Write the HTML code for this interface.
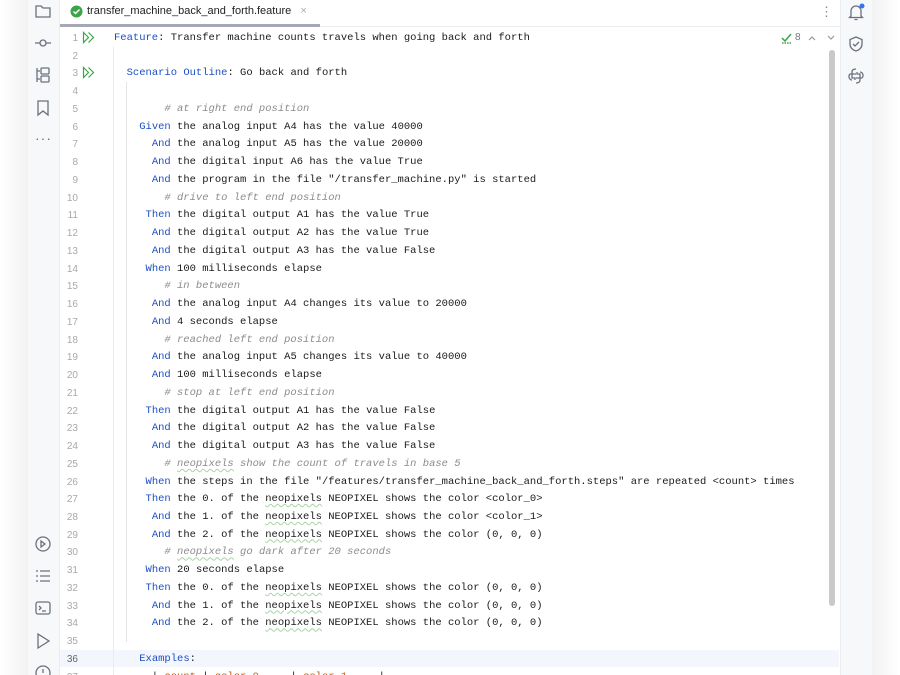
<!DOCTYPE html>
<html style="width:900px;height:675px;overflow:hidden"><head><meta charset="utf-8"><style>
*{margin:0;padding:0;box-sizing:border-box}
body{width:900px;height:675px;overflow:hidden;background:#fff;position:relative;font-family:"Liberation Sans",sans-serif}
.shadowL{position:absolute;left:0;top:0;width:28px;height:675px;background:linear-gradient(to right,#fff,#f2f2f2)}
.shadowR{position:absolute;left:872px;top:0;width:28px;height:675px;background:linear-gradient(to left,#fff,#f2f2f2)}
.lbar{position:absolute;left:28px;top:0;width:32px;height:675px;background:#f7f8fa;border-right:1px solid #ebecf0}
.rbar{position:absolute;left:840px;top:0;width:32px;height:675px;background:#f7f8fa;border-left:1px solid #ebecf0}
.tabs{position:absolute;left:60px;top:0;width:780px;height:27px;border-bottom:1px solid #ebecf0;background:#fff}
.tab{position:absolute;left:60px;top:0;width:270px;height:24px;font-size:11px;color:#222;line-height:23px;padding-left:27px;white-space:nowrap}
.tabline{position:absolute;left:60px;top:24px;width:260px;height:3px;background:#a3a8b3}
.code{position:absolute;left:0;top:30px;font-family:"Liberation Mono",monospace;font-size:10.5px;line-height:17.74px;white-space:pre;color:#1a1a1a}
.ln{position:absolute;left:60px;width:18px;text-align:right;color:#a6a9ae;font-family:"Liberation Sans",sans-serif;font-size:10px}
.l{position:absolute;left:114px}
.k{color:#1c4fc4}.c{color:#8c8c8c;font-style:italic}.o{color:#c25d12}
.w{text-decoration:underline wavy #a5d6a5;text-decoration-thickness:0.5px;text-underline-offset:2px}
svg{position:absolute}
</style></head><body>
<div class="shadowL"></div><div class="shadowR"></div>
<div style="position:absolute;left:60px;top:650px;width:779px;height:17px;background:#f3f6fd"></div>
<div class="lbar"></div><div class="rbar"></div>
<div class="tabs"></div>
<div class="tab">transfer_machine_back_and_forth.feature <span style="color:#aaa;margin-left:6px">×</span></div>
<div class="tabline"></div>
<svg style="left:70px;top:5px" width="13" height="13"><circle cx="6.5" cy="6.5" r="6" fill="#3aa548"/><path d="M3.5 6.5l2 2 4-4" stroke="#fff" stroke-width="1.5" fill="none"/></svg>
<div style="position:absolute;left:820px;top:4px;color:#888;font-size:13px">⋮</div>
<svg style="left:34px;top:3px" width="18" height="16" fill="none" stroke="#6c707e" stroke-width="1.3"><path d="M2 3h5l2 2h7v9H2z"/></svg>
<svg style="left:34px;top:35px" width="18" height="16" fill="none" stroke="#6c707e" stroke-width="1.3"><circle cx="9" cy="8" r="3"/><path d="M1 8h5M12 8h5"/></svg>
<svg style="left:34px;top:66px" width="18" height="18" fill="none" stroke="#6c707e" stroke-width="1.3"><path d="M3 2v14M3 5h3M3 13h3"/><rect x="7" y="2" width="8" height="6" rx="1"/><rect x="7" y="10" width="8" height="6" rx="1"/></svg>
<svg style="left:35px;top:99px" width="16" height="18" fill="none" stroke="#6c707e" stroke-width="1.3"><path d="M3 2h10v14l-5-4-5 4z"/></svg>
<div style="position:absolute;left:35px;top:130px;color:#6c707e;font-size:14px;letter-spacing:1px">···</div>
<svg style="left:34px;top:535px" width="18" height="18" fill="none" stroke="#6c707e" stroke-width="1.3"><circle cx="9" cy="9" r="7"/><path d="M7 6l4 3-4 3z"/></svg>
<svg style="left:34px;top:568px" width="18" height="16" fill="none" stroke="#6c707e" stroke-width="1.3"><path d="M2 3h2M6 3h10M2 8h2M6 8h10M2 13h2M6 13h10"/></svg>
<svg style="left:34px;top:600px" width="18" height="16" fill="none" stroke="#6c707e" stroke-width="1.3"><rect x="2" y="2" width="14" height="12" rx="2"/><path d="M5 6l2 2-2 2M8 11h4"/></svg>
<svg style="left:35px;top:632px" width="16" height="18" fill="none" stroke="#6c707e" stroke-width="1.3"><path d="M3 2l11 7-11 7z"/></svg>
<svg style="left:34px;top:664px" width="18" height="11" fill="none" stroke="#6c707e" stroke-width="1.3"><circle cx="9" cy="9" r="7"/><path d="M9 5v4"/></svg>
<svg style="left:847px;top:2px" width="20" height="20" fill="none" stroke="#6c707e" stroke-width="1.3"><path d="M4 14V9a5 5 0 0 1 10 0v5l1.5 1.5h-13zM7.5 17.5h3"/><circle cx="15" cy="4" r="2.5" fill="#3574f0" stroke="none"/></svg>
<svg style="left:847px;top:35px" width="18" height="18" fill="none" stroke="#6c707e" stroke-width="1.3"><path d="M9 2l6 2.5v4.5c0 4-3 6-6 7-3-1-6-3-6-7V4.5z"/><path d="M6 9l2 2 4-4"/></svg>
<svg style="left:847px;top:67px" width="18" height="18" fill="none" stroke="#6c707e" stroke-width="1.3"><path d="M9 2c-3 0-4 1-4 3v2h4M9 16c3 0 4-1 4-3v-2H9M5 7H3.5C2 7 2 9 2 10s1 3 3 3M13 11h1.5C16 11 16 9 16 8s-1-3-3-3"/><path d="M5 7v4h3v2M13 11V7h-3V5"/></svg>
<svg style="left:781px;top:32px" width="12" height="12" fill="none" stroke="#3aa548" stroke-width="1.5"><path d="M1 6l3 3 6-7"/><path d="M1 11h9" stroke-dasharray="1.5 1"/></svg>
<div style="position:absolute;left:795px;top:32px;font-size:10px;color:#777">8</div>
<svg style="left:808px;top:34px" width="30" height="8" fill="none" stroke="#999" stroke-width="1.2"><path d="M1 6l3-3 3 3M20 2l3 3 3-3"/></svg>
<div style="position:absolute;left:829px;top:50px;width:6px;height:556px;border-radius:3px;background:#c9c9c9"></div>
<div style="position:absolute;left:113px;top:46px;width:1px;height:629px;background:#ececec"></div>
<div style="position:absolute;left:126px;top:82px;width:1px;height:560px;background:#e4e4e4"></div>
<svg style="left:82px;top:31px" width="14" height="13" fill="none" stroke="#3aa548" stroke-width="1.2"><path d="M1.5 1.5l5 5-5 5zM6.5 1.5l5 5-5 5"/></svg>
<svg style="left:82px;top:66px" width="14" height="13" fill="none" stroke="#3aa548" stroke-width="1.2"><path d="M1.5 1.5l5 5-5 5zM6.5 1.5l5 5-5 5"/></svg>
<div class="code">
<div class="ln" style="top:0px">1</div><div class="l" style="top:0px"><span class="k">Feature</span>: Transfer machine counts travels when going back and forth</div>
<div class="ln" style="top:17.74px">2</div>
<div class="ln" style="top:35.48px">3</div><div class="l" style="top:35.48px">  <span class="k">Scenario Outline</span>: Go back and forth</div>
<div class="ln" style="top:53.22px">4</div>
<div class="ln" style="top:70.96px">5</div><div class="l c" style="top:70.96px">        # at right end position</div>
<div class="ln" style="top:88.7px">6</div><div class="l" style="top:88.7px">    <span class="k">Given</span> the analog input A4 has the value 40000</div>
<div class="ln" style="top:106.44px">7</div><div class="l" style="top:106.44px">      <span class="k">And</span> the analog input A5 has the value 20000</div>
<div class="ln" style="top:124.18px">8</div><div class="l" style="top:124.18px">      <span class="k">And</span> the digital input A6 has the value True</div>
<div class="ln" style="top:141.92px">9</div><div class="l" style="top:141.92px">      <span class="k">And</span> the program in the file "/transfer_machine.py" is started</div>
<div class="ln" style="top:159.66px">10</div><div class="l c" style="top:159.66px">        # drive to left end position</div>
<div class="ln" style="top:177.4px">11</div><div class="l" style="top:177.4px">     <span class="k">Then</span> the digital output A1 has the value True</div>
<div class="ln" style="top:195.14px">12</div><div class="l" style="top:195.14px">      <span class="k">And</span> the digital output A2 has the value True</div>
<div class="ln" style="top:212.88px">13</div><div class="l" style="top:212.88px">      <span class="k">And</span> the digital output A3 has the value False</div>
<div class="ln" style="top:230.62px">14</div><div class="l" style="top:230.62px">     <span class="k">When</span> 100 milliseconds elapse</div>
<div class="ln" style="top:248.36px">15</div><div class="l c" style="top:248.36px">        # in between</div>
<div class="ln" style="top:266.1px">16</div><div class="l" style="top:266.1px">      <span class="k">And</span> the analog input A4 changes its value to 20000</div>
<div class="ln" style="top:283.84px">17</div><div class="l" style="top:283.84px">      <span class="k">And</span> 4 seconds elapse</div>
<div class="ln" style="top:301.58px">18</div><div class="l c" style="top:301.58px">        # reached left end position</div>
<div class="ln" style="top:319.32px">19</div><div class="l" style="top:319.32px">      <span class="k">And</span> the analog input A5 changes its value to 40000</div>
<div class="ln" style="top:337.06px">20</div><div class="l" style="top:337.06px">      <span class="k">And</span> 100 milliseconds elapse</div>
<div class="ln" style="top:354.8px">21</div><div class="l c" style="top:354.8px">        # stop at left end position</div>
<div class="ln" style="top:372.54px">22</div><div class="l" style="top:372.54px">     <span class="k">Then</span> the digital output A1 has the value False</div>
<div class="ln" style="top:390.28px">23</div><div class="l" style="top:390.28px">      <span class="k">And</span> the digital output A2 has the value False</div>
<div class="ln" style="top:408.02px">24</div><div class="l" style="top:408.02px">      <span class="k">And</span> the digital output A3 has the value False</div>
<div class="ln" style="top:425.76px">25</div><div class="l c" style="top:425.76px">        # <span class="w">neopixels</span> show the count of travels in base 5</div>
<div class="ln" style="top:443.5px">26</div><div class="l" style="top:443.5px">     <span class="k">When</span> the steps in the file "/features/transfer_machine_back_and_forth.steps" are repeated &lt;count&gt; times</div>
<div class="ln" style="top:461.24px">27</div><div class="l" style="top:461.24px">     <span class="k">Then</span> the 0. of the <span class="w">neopixels</span> NEOPIXEL shows the color &lt;color_0&gt;</div>
<div class="ln" style="top:478.98px">28</div><div class="l" style="top:478.98px">      <span class="k">And</span> the 1. of the <span class="w">neopixels</span> NEOPIXEL shows the color &lt;color_1&gt;</div>
<div class="ln" style="top:496.72px">29</div><div class="l" style="top:496.72px">      <span class="k">And</span> the 2. of the <span class="w">neopixels</span> NEOPIXEL shows the color (0, 0, 0)</div>
<div class="ln" style="top:514.46px">30</div><div class="l c" style="top:514.46px">        # <span class="w">neopixels</span> go dark after 20 seconds</div>
<div class="ln" style="top:532.2px">31</div><div class="l" style="top:532.2px">     <span class="k">When</span> 20 seconds elapse</div>
<div class="ln" style="top:549.94px">32</div><div class="l" style="top:549.94px">     <span class="k">Then</span> the 0. of the <span class="w">neopixels</span> NEOPIXEL shows the color (0, 0, 0)</div>
<div class="ln" style="top:567.68px">33</div><div class="l" style="top:567.68px">      <span class="k">And</span> the 1. of the <span class="w">neopixels</span> NEOPIXEL shows the color (0, 0, 0)</div>
<div class="ln" style="top:585.42px">34</div><div class="l" style="top:585.42px">      <span class="k">And</span> the 2. of the <span class="w">neopixels</span> NEOPIXEL shows the color (0, 0, 0)</div>
<div class="ln" style="top:603.16px">35</div>
<div class="ln" style="top:620.9px;color:#666">36</div><div class="l" style="top:620.9px">    <span class="k">Examples</span>:</div>
<div class="ln" style="top:638.64px">37</div><div class="l" style="top:638.64px">      | <span class="o">count</span> | <span class="o">color_0</span>     | <span class="o">color_1</span>     |</div>
</div>
</body></html>
